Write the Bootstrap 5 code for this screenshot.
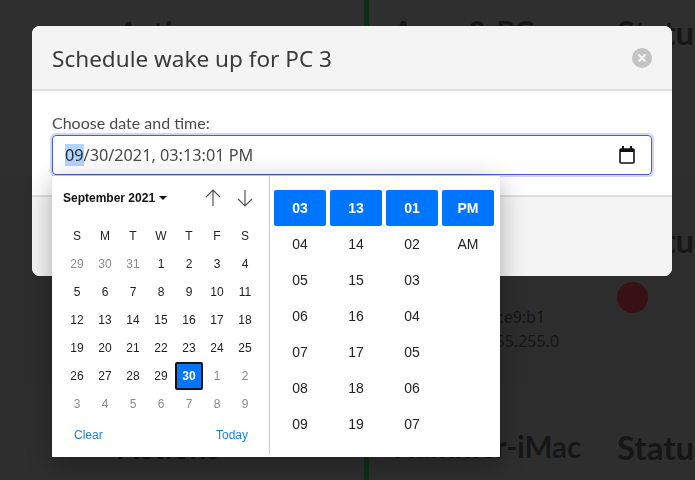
<!doctype html>
<html lang="en">
<head>
    <meta charset="utf-8">
    <meta name="viewport" content="width=device-width, initial-scale=1">
    <title>Schedule wake up</title>
    <link href="https://cdn.jsdelivr.net/npm/bootstrap@5.3.3/dist/css/bootstrap.min.css" rel="stylesheet">
    <style>
        html, body { height: 100%; overflow: hidden; }
        body { background: #2e2e2e; font-family: "Noto Sans", sans-serif; color: #383838; }

        /* dimmed page behind the modal */
        .pc-list { margin-top: -32px; }
        .pc-row { display: flex; height: 207.5px; padding-top: 46px; background: #2f2f2f; color: #161616; }
        .pc-row:nth-child(2) { background: #2d2d2d; }
        .pc-row:nth-child(3) { background: #2e2e2e; height: 97px; }
        .pc-act { width: 364px; flex: none; padding-left: 118px; }
        .pc-main { display: flex; flex: none; border-left: 5px solid #0d2f15; padding-left: 24px; margin-top: -46px; padding-top: 46px; }
        .pc-name { width: 224px; flex: none; }
        .pc-head { font: 700 30px/36px Lato, sans-serif; white-space: nowrap; }
        .pc-name.pc-head { font-size: 29.5px; word-spacing: 8px; }
        .pc-stat { font-size: 33px; }
        .pc-info { font-size: 16px; line-height: 24px; margin-top: 47px; white-space: nowrap; }
        .pc-dot { width: 31px; height: 31px; border-radius: 50%; background: #371116; margin-top: 24px; }

        /* modal */
        .wake-modal { position: absolute; left: 32px; top: 26px; width: 640px; height: 250px; background: #fff; border-radius: 8px; overflow: hidden; will-change: transform; }
        .wake-head { height: 65px; background: #f4f4f4; border-bottom: 2px solid #dedede; padding: 0 20px; }
        .wake-head h5 { font-size: 22.55px; font-weight: 400; margin: 3px 0 0; color: #3b3b3b; }
        .wake-close { width: 20px; height: 20px; border-radius: 50%; background: #c4c4c4; color: #f4f4f4; border: 0; padding: 0; display: flex; align-items: center; justify-content: center; }
        .wake-body { height: 104px; padding: 20px 20px 0; }
        .wake-body label { font-family: Lato, sans-serif; font-size: 16px; line-height: 24px; color: #4a4a4a; display: block; }
        .wake-foot { height: 81px; background: #f4f4f4; border-top: 2px solid #dedede; }
        .wake-input { height: 40px; border: 1px solid #4a5fc8; border-radius: 4px; box-shadow: 0 0 0 2px #cfd6f1; padding: 0 16px 0 12px; font-size: 16.25px; color: #4a4a4a; }
        .wake-sel { background: #b3d4fc; color: #1f2a38; }

        /* date picker popup */
        .dp-pop { position: absolute; left: 52px; top: 176px; width: 448px; height: 281px; background: #fff; display: flex; box-shadow: 0 6px 24px rgba(0, 0, 0, .3); font-family: "Liberation Sans", sans-serif; color: #222; will-change: transform; }
        .dp-cal { width: 218px; height: 278px; border-right: 1px solid #c8c8c8; flex: none; padding: 0 1px 0 11px; }
        .dp-title { height: 44px; font-size: 12px; font-weight: 700; color: #111; margin-bottom: 2px; }
        .dp-caret { width: 0; height: 0; border: 4px solid transparent; border-top-color: #111; border-bottom: 0; margin-left: 4px; }
        .dp-title svg { display: block; }
        .dp-arrow-up { margin-right: 16px; }
        .dp-arrow-down { margin-right: 15px; }
        .dp-days { display: grid; grid-template-columns: repeat(7, 28px); grid-auto-rows: 28px; font-size: 12px; text-align: center; line-height: 28px; }
        .dp-out { color: #8c8c8c; }
        .dp-on { background: #0075ff; color: #fff; font-weight: 700; border: 2px solid #111; border-radius: 2px; line-height: 24px; }
        .dp-foot { font-size: 12px; color: #1a83dd; padding: 8px 20px 0 11px; }
        .dp-times { display: flex; padding: 14px 6px 0 4px; gap: 4px; font-size: 14px; }
        .dp-tcol { width: 52px; text-align: center; }
        .dp-tcol div { height: 36px; line-height: 36px; }
        .dp-tcol .dp-now { background: #0075ff; color: #fff; font-weight: 700; border-radius: 2px; }
    </style>
</head>
<body>
    <div class="pc-list">
        <div class="pc-row">
            <div class="pc-act pc-head">Actions</div>
            <div class="pc-main">
                <div class="pc-name pc-head">Acer 3-PC</div>
                <div class="pc-head pc-stat">Status</div>
            </div>
        </div>
        <div class="pc-row">
            <div class="pc-act pc-head">Actions</div>
            <div class="pc-main">
                <div class="pc-name">
                    <div class="pc-head">PC 3</div>
                    <div class="pc-info">MAC: 1c:6d:9d:e9:b1<br>Subnet: 255.255.255.0</div>
                </div>
                <div>
                    <div class="pc-head pc-stat">Status</div>
                    <div class="pc-dot"></div>
                </div>
            </div>
        </div>
        <div class="pc-row">
            <div class="pc-act pc-head">Actions</div>
            <div class="pc-main">
                <div class="pc-name pc-head">Hammer-iMac</div>
                <div class="pc-head pc-stat">Status</div>
            </div>
        </div>
    </div>

    <div class="wake-modal">
        <div class="wake-head d-flex align-items-center justify-content-between">
            <h5>Schedule wake up for PC 3</h5>
            <button class="wake-close" type="button" aria-label="Close">
                <svg width="10" height="10" viewBox="0 0 10 10"><path d="M1.5 1.5l7 7M8.5 1.5l-7 7" stroke="currentColor" stroke-width="2.2"/></svg>
            </button>
        </div>
        <div class="wake-body">
            <label>Choose date and time:</label>
            <div class="wake-input d-flex align-items-center justify-content-between">
                <span><span class="wake-sel">09</span>/30/2021, 03:13:01 PM</span>
                <svg width="16" height="18" viewBox="0 0 16 18"><path d="M4 0v3M12 0v3" stroke="#111" stroke-width="2"/><path d="M1 3h14v3H1z" fill="#111"/><rect x="1" y="3" width="14" height="14" rx="1" fill="none" stroke="#111" stroke-width="1.6"/></svg>
            </div>
        </div>
        <div class="wake-foot"></div>
    </div>

    <div class="dp-pop">
        <div class="dp-cal">
            <div class="dp-title d-flex align-items-center">
                <span>September 2021</span><span class="dp-caret"></span>
                <svg class="ms-auto dp-arrow-up" width="16" height="18" viewBox="0 0 16 18"><path d="M8 17V1M1 8l7-7 7 7" fill="none" stroke="#555" stroke-width="1.2"/></svg>
                <svg class="dp-arrow-down" width="16" height="18" viewBox="0 0 16 18"><path d="M8 1v16M1 10l7 7 7-7" fill="none" stroke="#555" stroke-width="1.2"/></svg>
            </div>
            <div class="dp-days" id="dpDays"></div>
            <div class="dp-foot d-flex justify-content-between"><span>Clear</span><span>Today</span></div>
        </div>
        <div class="dp-times" id="dpTimes"></div>
    </div>

    <script src="https://cdn.jsdelivr.net/npm/bootstrap@5.3.3/dist/js/bootstrap.bundle.min.js"></script>
    <script>
        const cells = ['S', 'M', 'T', 'W', 'T', 'F', 'S'].map(d => `<div>${d}</div>`);
        [29, 30, 31].forEach(d => cells.push(`<div class="dp-out">${d}</div>`));
        for (let d = 1; d <= 30; d++) {
            cells.push(`<div class="${d === 30 ? 'dp-on' : ''}">${d}</div>`);
        }
        for (let d = 1; d <= 9; d++) {
            cells.push(`<div class="dp-out">${d}</div>`);
        }
        document.getElementById('dpDays').innerHTML = cells.join('');

        const cols = [
            ['03', '04', '05', '06', '07', '08', '09'],
            ['13', '14', '15', '16', '17', '18', '19'],
            ['01', '02', '03', '04', '05', '06', '07'],
            ['PM', 'AM']
        ];
        document.getElementById('dpTimes').innerHTML = cols.map(c =>
            `<div class="dp-tcol">${c.map((v, i) => `<div class="${i === 0 ? 'dp-now' : ''}">${v}</div>`).join('')}</div>`
        ).join('');
    </script>
</body>
</html>
